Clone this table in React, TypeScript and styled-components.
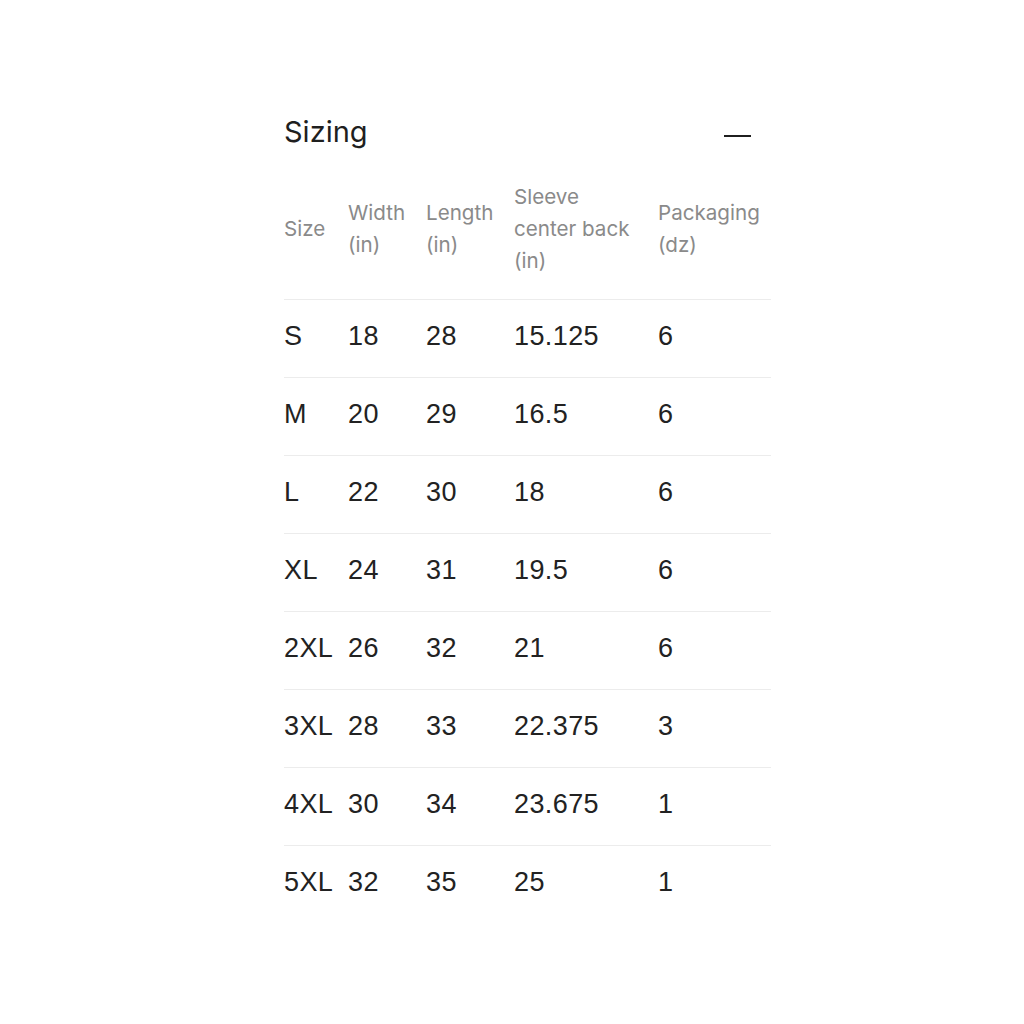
import React from "react";
import styled, { createGlobalStyle } from "styled-components";

const Global = createGlobalStyle`
  html, body { margin: 0; padding: 0; background: #fff; }
  body { font-family: Inter, "Liberation Sans", sans-serif; }
`;

const Page = styled.div`
  padding: 114px 0 0 284px;
`;

const Panel = styled.section`
  width: 487px;
`;

const TitleRow = styled.div`
  display: flex;
  align-items: center;
  justify-content: space-between;
  height: 36px;
  margin-bottom: 31px;
`;

const Title = styled.h2`
  margin: 0;
  font-family: Inter, "Liberation Sans", sans-serif;
  font-weight: 400;
  font-size: 29px;
  line-height: 36px;
  color: #1f1f1f;
`;

const ToggleButton = styled.button`
  border: 0;
  background: none;
  padding: 0;
  margin: 7px 20px 0 0;
  width: 27px;
  height: 20px;
  display: flex;
  align-items: center;
  cursor: pointer;
`;

const Dash = styled.span`
  display: block;
  width: 27px;
  height: 2px;
  background: #1f1f1f;
`;

const Table = styled.table`
  width: 487px;
  border-collapse: collapse;
  table-layout: fixed;
`;

const Col = styled.col<{ $w: number }>`
  width: ${(p) => p.$w}px;
`;

const Th = styled.th`
  text-align: left;
  vertical-align: middle;
  font-family: Inter, "Liberation Sans", sans-serif;
  font-weight: 400;
  font-size: 20.6px;
  line-height: 32px;
  color: #8a8a8a;
  padding: 0 14px 22px 0;
  border-bottom: 1px solid #ececec;
`;

const Tr = styled.tr`
  & + & td { border-top: 1px solid #ececec; }
`;

const Td = styled.td`
  height: 73px;
  padding: 0 0 4px 0;
  font-family: "Liberation Sans", Arial, sans-serif;
  font-size: 27px;
  letter-spacing: 0.4px;
  color: #222;
  vertical-align: middle;
`;

const cols = [
  { label: "Size", w: 64 },
  { label: "Width (in)", w: 78 },
  { label: "Length (in)", w: 88 },
  { label: "Sleeve center back (in)", w: 144 },
  { label: "Packaging (dz)", w: 113 },
];

const rows = [
  ["S", "18", "28", "15.125", "6"],
  ["M", "20", "29", "16.5", "6"],
  ["L", "22", "30", "18", "6"],
  ["XL", "24", "31", "19.5", "6"],
  ["2XL", "26", "32", "21", "6"],
  ["3XL", "28", "33", "22.375", "3"],
  ["4XL", "30", "34", "23.675", "1"],
  ["5XL", "32", "35", "25", "1"],
];

export default function App() {
  return (
    <>
      <Global />
      <Page>
        <Panel>
          <TitleRow>
            <Title>Sizing</Title>
            <ToggleButton aria-label="Collapse">
              <Dash />
            </ToggleButton>
          </TitleRow>
          <Table>
            <colgroup>
              {cols.map((c) => (
                <Col key={c.label} $w={c.w} />
              ))}
            </colgroup>
            <thead>
              <tr>
                {cols.map((c) => (
                  <Th key={c.label}>{c.label}</Th>
                ))}
              </tr>
            </thead>
            <tbody>
              {rows.map((r) => (
                <Tr key={r[0]}>
                  {r.map((v, i) => (
                    <Td key={i}>{v}</Td>
                  ))}
                </Tr>
              ))}
            </tbody>
          </Table>
        </Panel>
      </Page>
    </>
  );
}
